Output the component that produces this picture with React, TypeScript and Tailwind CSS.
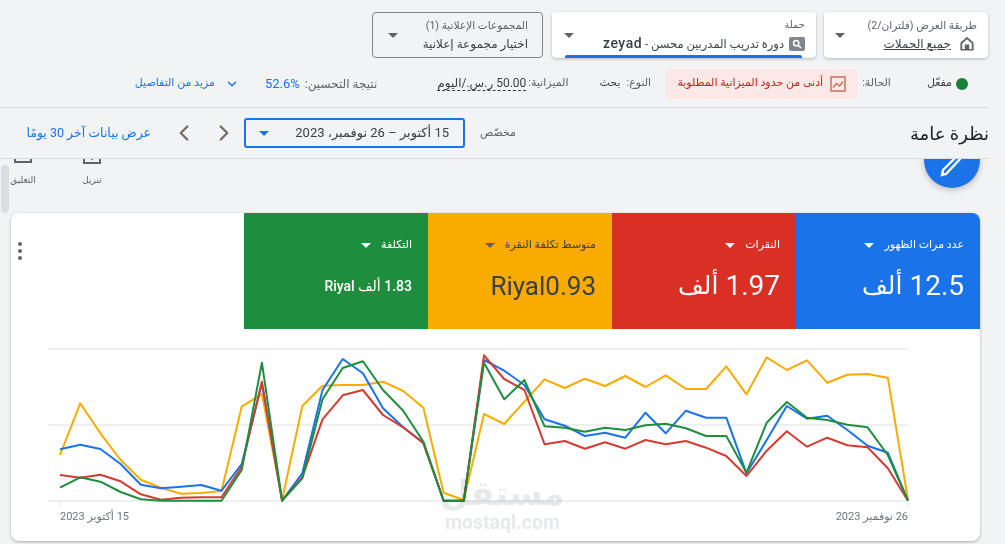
import type { ReactNode } from "react";
import { ChevronDown, ChevronLeft, ChevronRight } from "lucide-react";

const FONT = "font-['Roboto','DejaVu_Sans',sans-serif]";

// y values read off the chart, in px relative to the chart's top (y=340 on the page)
const SERIES = [
  {
    color: "#f9ab00",
    ys: [345, 190, 280, 360, 419, 443, 461, 459, 453, 200, 162, 480, 198, 137, 135, 135, 125, 153, 203, 458, 480, 222, 252, 185, 118, 144, 116, 138, 108, 141, 106, 147, 147, 79, 163, 52, 90, 61, 128, 104, 102, 113, 480],
  },
  {
    color: "#1a73e8",
    ys: [328, 314, 327, 372, 434, 445, 440, 435, 452, 372, 130, 482, 400, 150, 57, 100, 205, 262, 308, 482, 482, 60, 92, 135, 238, 257, 288, 278, 293, 218, 280, 212, 233, 233, 400, 300, 198, 236, 227, 270, 317, 338, 482],
  },
  {
    color: "#d33b33",
    ys: [405, 413, 404, 424, 463, 479, 473, 472, 472, 380, 125, 482, 412, 238, 166, 150, 225, 262, 310, 482, 482, 46, 117, 150, 313, 303, 326, 307, 326, 300, 313, 303, 323, 348, 408, 332, 274, 320, 293, 316, 322, 385, 482],
  },
  {
    color: "#1e8e3e",
    ys: [443, 412, 425, 456, 478, 482, 482, 482, 482, 390, 68, 482, 415, 178, 84, 64, 150, 212, 305, 482, 482, 68, 178, 120, 259, 263, 275, 263, 270, 256, 251, 265, 288, 288, 398, 248, 186, 233, 240, 254, 262, 345, 482],
  },
];

function toPoints(ys: number[]) {
  return ys.map((v, i) => `${(49 + i * 20.19).toFixed(1)},${(11 + v / 3).toFixed(1)}`).join(" ");
}

function Caret({ light }: { light?: boolean }) {
  return (
    <span
      className={`h-0 w-0 border-x-[5px] border-t-[5px] border-x-transparent ${
        light ? "border-t-white" : "border-t-[#5f6368]"
      }`}
    />
  );
}

function HomeIcon() {
  return (
    <svg width="14" height="15" viewBox="0 0 14 15" className="mr-[3px] shrink-0">
      <path d="M7 .8.4 6.8v7.7h13.2V6.8zM2.2 13V7.6L7 3.2l4.8 4.4V13H9.2V8.6H4.8V13z" fill="#5f6368" />
    </svg>
  );
}

function SearchBadge() {
  return (
    <span className="flex h-[14px] w-[16px] shrink-0 items-center justify-center rounded-[2px] bg-[#80868b]">
      <svg width="10" height="10" viewBox="0 0 10 10">
        <circle cx="4.2" cy="4.2" r="2.6" fill="none" stroke="#fff" strokeWidth="1.5" />
        <path d="M6.2 6.2 9 9" stroke="#fff" strokeWidth="1.6" />
      </svg>
    </span>
  );
}

function Metric({
  label,
  value,
  bg,
  dark,
  size = "text-[28px]",
}: {
  label: string;
  value: ReactNode;
  bg: string;
  dark?: boolean;
  size?: string;
}) {
  return (
    <div className={`flex h-[116px] w-[184px] flex-col px-4 pt-[25px] ${bg} ${dark ? "text-[#3c4043]" : "text-white"}`}>
      <div className="flex h-[14px] items-center gap-[10px] text-[11px] leading-[14px]">
        <span>{label}</span>
        <Caret light={!dark} />
      </div>
      <div className={`mt-[15px] flex h-[38px] items-center gap-[7px] whitespace-nowrap ${size}`}>{value}</div>
    </div>
  );
}

export default function App() {
  return (
    <div dir="rtl" className={`${FONT} flex h-[544px] w-[1005px] flex-col overflow-hidden bg-[#f1f3f4] text-[#3c4043]`}>
      {/* Scope pickers */}
      <div className="flex h-[70px] shrink-0 items-start gap-2 pr-[17px] pt-3">
        <div className="flex h-[46px] w-[164px] items-center rounded bg-white pl-[11px] pr-[11px] shadow-[0_1px_3px_rgba(60,64,67,0.35)]">
          <div className="flex-1">
            <div className="whitespace-nowrap text-[10.6px] leading-[14px] text-[#5f6368]">طريقة العرض (فلتران/2)</div>
            <div className="mt-[3px] flex items-center gap-[9px] text-[12px] leading-[16px]">
              <HomeIcon />
              <span className="underline">جميع الحملات</span>
            </div>
          </div>
          <Caret />
        </div>
        <div className="relative flex h-[46px] w-[264px] items-center overflow-hidden rounded bg-white pl-3 pr-[11px] shadow-[0_1px_3px_rgba(60,64,67,0.35)]">
          <div className="flex-1">
            <div className="text-[10px] leading-[14px] text-[#5f6368]">حملة</div>
            <div className="mt-[3px] flex items-center gap-[5px] whitespace-nowrap text-[11.5px] leading-[16px]">
              <SearchBadge />
              <span>
                دورة تدريب المدربين محسن - <span className="text-[14px] font-medium tracking-[0.5px]">zeyad</span>
              </span>
            </div>
          </div>
          <Caret />
          <span className="absolute bottom-0 left-[13px] h-[3px] w-[237px] rounded-t-[2px] bg-[#1a73e8]" />
        </div>
        <div className="mr-px flex h-[46px] w-[171px] items-center rounded border border-[#80868b] pl-[15px] pr-[14px]">
          <div className="flex-1">
            <div className="whitespace-nowrap text-[10.6px] leading-[14px] text-[#5f6368]">المجموعات الإعلانية (1)</div>
            <div className="mt-[3px] whitespace-nowrap text-[12px] leading-[16px]">اختيار مجموعة إعلانية</div>
          </div>
          <Caret />
        </div>
      </div>

      {/* Status summary */}
      <div className="mr-4 flex h-[38px] shrink-0 items-center whitespace-nowrap border-b border-[#dadce0] pb-[11px] pr-[21px] pt-[1px] text-[11px] text-[#5f6368]">
        <span className="h-[12px] w-[12px] rounded-full bg-[#188038]" />
        <span className="mr-[4px] text-[#3c4043]">مفعّل</span>
        <span className="mr-[36px]">الحالة:</span>
        <div className="mr-[4px] flex h-[30px] w-[192px] items-center gap-[7px] rounded bg-[#fce8e6] pr-[12px] text-[#c5221f]">
          <svg width="16" height="16" viewBox="0 0 16 16" className="shrink-0">
            <rect x="1" y="1" width="14" height="14" fill="none" stroke="#c5735f" strokeWidth="1.5" />
            <path d="m3 11.5 3.5-4 3 2.5L13 5.5" fill="none" stroke="#c5735f" strokeWidth="1.5" />
          </svg>
          <span>أدنى من حدود الميزانية المطلوبة</span>
        </div>
        <span className="mr-[15px]">النوع:</span>
        <span className="mr-[6px] text-[#3c4043]">بحث</span>
        <span className="mr-[31px]">الميزانية:</span>
        <span className="mr-[2px] border-b border-dashed border-[#3c4043] text-[12px] leading-[14px] text-[#3c4043]">50.00 ر.س./اليوم</span>
        <span className="mr-[60px] text-[12px]">نتيجة التحسين:</span>
        <span className="mr-[5px] text-[13px] text-[#1a73e8]">52.6%</span>
        <ChevronDown size={14} strokeWidth={2.5} className="mr-[26px] text-[#1a73e8]" />
        <span className="mr-[10px] text-[#1a73e8]">مزيد من التفاصيل</span>
      </div>

      {/* Title and date range */}
      <div className="mr-4 flex h-[51px] shrink-0 items-center border-b border-[#dadce0]">
        <h1 className="w-[75px] whitespace-nowrap text-[18px] font-normal text-[#202124]">نظرة عامة</h1>
        <span className="mr-[398px] w-[42px] whitespace-nowrap text-[11px] text-[#5f6368]">مخصّص</span>
        <div className="mr-[9px] flex h-[30px] w-[221px] items-center justify-between rounded-[3px] border-2 border-[#1a73e8] pl-[13px] pr-[14px] text-[13px]">
          <span className="whitespace-nowrap">15 أكتوبر – 26 نوفمبر، 2023</span>
          <span className="h-0 w-0 border-x-[5px] border-t-[5px] border-x-transparent border-t-[#1a73e8]" />
        </div>
        <ChevronRight size={26} strokeWidth={2} className="mr-[7px] text-[#6f6a64]" />
        <ChevronLeft size={26} strokeWidth={2} className="mr-[14px] text-[#6f6a64]" />
        <span className="mr-[20px] whitespace-nowrap text-[12.5px] text-[#1a73e8]">عرض بيانات آخر 30 يومًا</span>
      </div>

      {/* Scrolled content */}
      <div className="relative min-h-0 flex-1 overflow-hidden">
        <span className="absolute left-[1px] top-[6px] h-[48px] w-[8px] rounded bg-[#dadce0]" />
        <button className="absolute right-[25px] top-[-27px] flex h-[56px] w-[56px] items-center justify-center rounded-full bg-[#1a73e8] pt-[8px] shadow-[0_2px_6px_rgba(60,64,67,0.3)]">
          <svg width="26" height="26" viewBox="0 0 26 26">
            <path d="M3 24l1-5L18 5l3 3L7 23z" fill="none" stroke="#fff" strokeWidth="2.4" />
          </svg>
        </button>

        {/* Toolbar, partly scrolled under the header */}
        <div className="flex h-[54px] flex-row-reverse items-end gap-[43px] pb-[26px] pl-[10px] text-[9px] text-[#5f6368]">
          <div className="flex w-[26px] flex-col items-center">
            <span className="mb-[11px] mt-[-8px] h-[5px] w-[18px] border-x-2 border-b-2 border-[#5f6368]" />
            <span className="whitespace-nowrap">التعليق</span>
          </div>
          <div className="flex w-[26px] flex-col items-center">
            <svg width="18" height="8" viewBox="0 0 18 8" className="mb-[10px] mt-[-8px]">
              <path d="M1 0v7h16V0" fill="none" stroke="#5f6368" strokeWidth="2" />
              <path d="M5 0h8L9 4.5z" fill="#5f6368" />
            </svg>
            <span className="whitespace-nowrap">تنزيل</span>
          </div>
        </div>

        {/* Performance card */}
        <div className="relative mr-[25px] h-[328px] w-[969px] overflow-hidden rounded-lg bg-white shadow-[0_1px_3px_rgba(60,64,67,0.4)]">
          <div className="flex">
            <Metric
              label="عدد مرات الظهور"
              value={
                <>
                  <span>12.5</span>
                  <span className="text-[25px]">ألف</span>
                </>
              }
              bg="bg-[#1a73e8]"
            />
            <Metric
              label="النقرات"
              value={
                <>
                  <span>1.97</span>
                  <span className="text-[25px]">ألف</span>
                </>
              }
              bg="bg-[#d93025]"
            />
            <Metric label="متوسط تكلفة النقرة" value="Riyal0.93" bg="bg-[#f9ab00]" dark size="text-[26px]" />
            <Metric label="التكلفة" value="1.83 ألف Riyal" bg="bg-[#1e8e3e]" size="text-[14px] font-medium" />
            <div className="flex flex-1 justify-end pl-[7px] pt-[29px]">
              <div className="flex flex-col gap-[3px]">
                <span className="h-[4px] w-[4px] rounded-full bg-[#5f6368]" />
                <span className="h-[4px] w-[4px] rounded-full bg-[#5f6368]" />
                <span className="h-[4px] w-[4px] rounded-full bg-[#5f6368]" />
              </div>
            </div>
          </div>

          <svg width="969" height="178" viewBox="0 0 969 178" className="block">
            {[20, 96, 172].map((y) => (
              <line key={y} x1="37" x2="897" y1={y} y2={y} stroke="#e8eaed" strokeWidth="1.5" />
            ))}
            <line x1="49" x2="49" y1="172" y2="178" stroke="#e8eaed" />
            <line x1="897" x2="897" y1="172" y2="178" stroke="#e8eaed" />
            {SERIES.map((s) => (
              <polyline
                key={s.color}
                points={toPoints(s.ys)}
                fill="none"
                stroke={s.color}
                strokeWidth="2"
                strokeLinejoin="round"
              />
            ))}
          </svg>
          <div className="flex justify-between pl-[49px] pr-[72px] pt-[2px] text-[11px] text-[#70757a]">
            <span>26 نوفمبر 2023</span>
            <span>15 أكتوبر 2023</span>
          </div>

          {/* mostaql watermark */}
          <div className="pointer-events-none absolute left-[425px] top-[260px] flex w-[133px] flex-col items-center text-[#e8e9ea] mix-blend-multiply">
            <span className="text-[34px] font-bold leading-[40px]">مستقل</span>
            <span dir="ltr" className="text-[19.5px] font-bold leading-[20px]">mostaql.com</span>
          </div>
        </div>
      </div>
    </div>
  );
}
